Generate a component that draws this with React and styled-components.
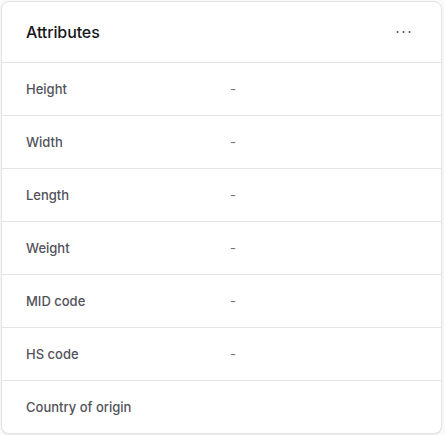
import React from "react";
import styled, { createGlobalStyle } from "styled-components";

const Global = createGlobalStyle`
  html, body { margin: 0; padding: 0; background: #fafafa; }
  body { padding: 1px; font-family: Inter, "Noto Sans", sans-serif; }
`;

const Card = styled.div`
  width: 441px;
  box-sizing: border-box;
  background: #ffffff;
  border: 1px solid #e4e4e7;
  border-radius: 8px;
  box-shadow: 0 1px 2px rgba(0, 0, 0, 0.08);
  overflow: hidden;
`;

const Header = styled.div`
  height: 60px;
  display: flex;
  align-items: center;
  justify-content: space-between;
  padding: 0 24px;
  border-bottom: 1px solid #e4e4e7;
`;

const Title = styled.h2`
  margin: 0;
  font-size: 16px;
  font-weight: 500;
  color: #18181b;
  letter-spacing: -0.1px;
`;

const IconButton = styled.button`
  width: 28px;
  height: 28px;
  border: none;
  background: transparent;
  display: flex;
  align-items: center;
  justify-content: center;
  padding: 0;
  color: #52525b;
`;

const Row = styled.div`
  height: 52px;
  display: grid;
  grid-template-columns: 204px 1fr;
  align-items: center;
  padding: 0 24px;
  border-bottom: ${(p) => (p.$last ? "none" : "1px solid #e4e4e7")};
`;

const Label = styled.span`
  font-size: 13px;
  font-weight: 500;
  color: #52525b;
`;

const Value = styled.span`
  font-size: 13px;
  font-weight: 400;
  color: #71717a;
`;

const rows = [
  ["Height", "-"],
  ["Width", "-"],
  ["Length", "-"],
  ["Weight", "-"],
  ["MID code", "-"],
  ["HS code", "-"],
  ["Country of origin", ""],
];

export default function App() {
  return (
    <>
      <Global />
      <Card>
        <Header>
          <Title>Attributes</Title>
          <IconButton aria-label="More">
            <svg width="15" height="15" viewBox="0 0 15 15" fill="currentColor">
              <circle cx="1.5" cy="7" r="1" />
              <circle cx="7.5" cy="7" r="1" />
              <circle cx="13.5" cy="7" r="1" />
            </svg>
          </IconButton>
        </Header>
        {rows.map(([l, v], i) => (
          <Row key={l} $last={i === rows.length - 1}>
            <Label>{l}</Label>
            <Value>{v}</Value>
          </Row>
        ))}
      </Card>
    </>
  );
}
